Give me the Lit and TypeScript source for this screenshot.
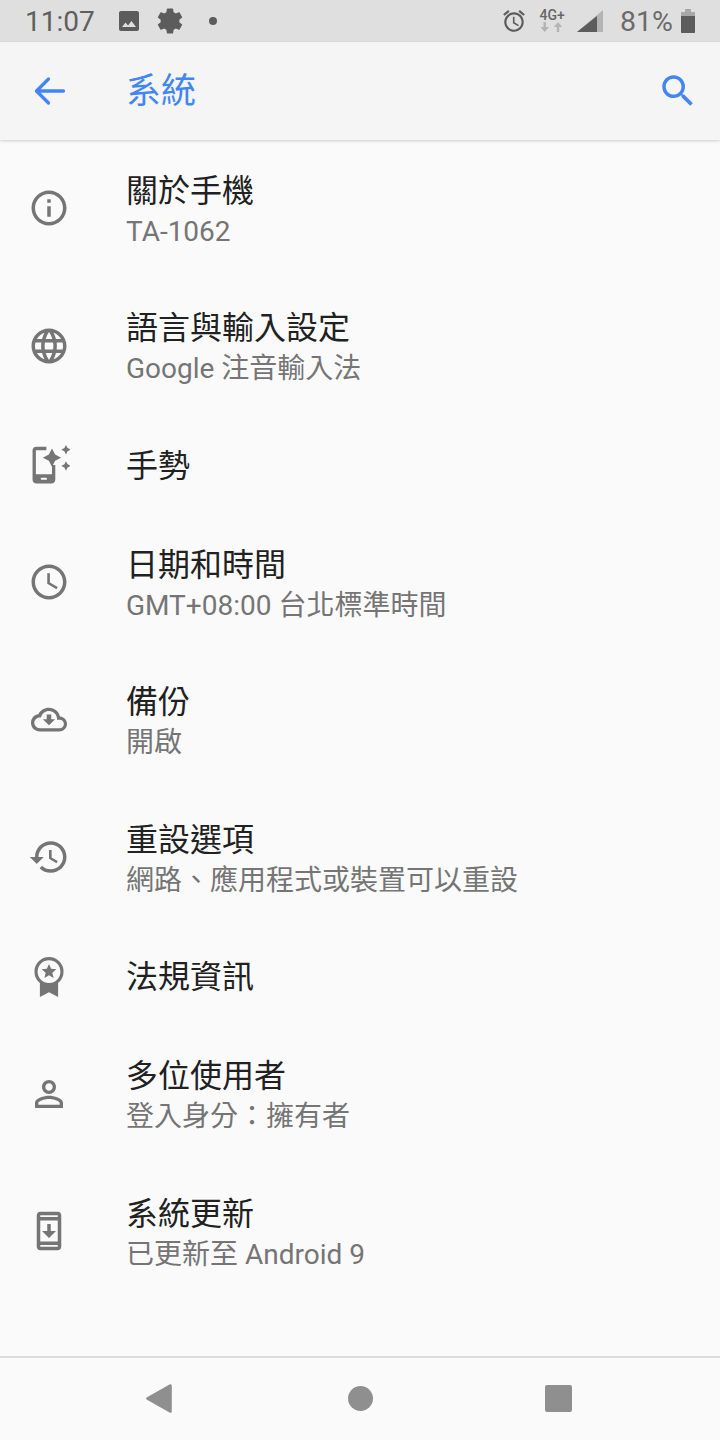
import { LitElement, html, css, svg } from 'lit';
import { customElement } from 'lit/decorators.js';

const BLUE = '#4285f4';

// Settings row icons, all on the 24 unit material grid
const ICONS = {
  info: svg`<path d="M11 7h2v2h-2zm0 4h2v6h-2zm1-9C6.48 2 2 6.48 2 12s4.48 10 10 10 10-4.48 10-10S17.52 2 12 2zm0 18c-4.41 0-8-3.59-8-8s3.59-8 8-8 8 3.59 8 8-3.59 8-8 8z"/>`,
  language: svg`<path d="M11.99 2C6.47 2 2 6.48 2 12s4.47 10 9.99 10C17.52 22 22 17.52 22 12S17.52 2 11.99 2zm6.93 6h-2.95c-.32-1.25-.78-2.45-1.38-3.56 1.84.63 3.37 1.91 4.33 3.56zM12 4.04c.83 1.2 1.48 2.53 1.91 3.96h-3.82c.43-1.43 1.08-2.76 1.91-3.96zM4.26 14C4.1 13.36 4 12.69 4 12s.1-1.36.26-2h3.38c-.08.66-.14 1.32-.14 2 0 .68.06 1.34.14 2H4.26zm.82 2h2.95c.32 1.25.78 2.45 1.38 3.56-1.84-.63-3.37-1.9-4.33-3.56zm2.95-8H5.08c.96-1.66 2.49-2.93 4.33-3.56C8.81 5.55 8.35 6.75 8.03 8zM12 19.96c-.83-1.2-1.48-2.53-1.91-3.96h3.82c-.43 1.43-1.08 2.76-1.91 3.96zM14.34 14H9.66c-.09-.66-.16-1.32-.16-2 0-.68.07-1.35.16-2h4.68c.09.65.16 1.32.16 2 0 .68-.07 1.34-.16 2zm.25 5.56c.6-1.11 1.06-2.31 1.38-3.56h2.95c-.96 1.65-2.49 2.93-4.33 3.56zM16.36 14c.08-.66.14-1.32.14-2 0-.68-.06-1.34-.14-2h3.38c.16.64.26 1.31.26 2s-.1 1.36-.26 2h-3.38z"/>`,
  gesture: svg`
    <path d="M10.5 2.2H4.6c-1.1 0-2 .9-2 2V21c0 1.2 1 2.2 2.2 2.2h8.6c1.2 0 2.2-1 2.2-2.2v-8.4h-1.9v5.2H4.5V4.1h6z"/>
    <rect x="7.4" y="19.8" width="3.4" height="1.2" rx=".3" fill="#fafafa"/>
    <path d="M13.7 3.200l1.800 3.400 3.400 1.800-3.400 1.800-1.800 3.400-1.800-3.400-3.400-1.800 3.400-1.800z"/>
    <path d="M21.7 1.100l.9 1.800 1.800.9-1.800.9-.9 1.800-.9-1.800-1.800-.9 1.800-.9z"/>
    <path d="M21.7 10.400l.9 1.800 1.800.9-1.800.9-.9 1.800-.9-1.800-1.800-.9 1.800-.9z"/>`,
  schedule: svg`<path d="M11.99 2C6.47 2 2 6.48 2 12s4.47 10 9.99 10C17.52 22 22 17.52 22 12S17.52 2 11.99 2zM12 20c-4.42 0-8-3.58-8-8s3.58-8 8-8 8 3.58 8 8-3.58 8-8 8z"/><path d="M12.5 7H11v6l5.25 3.15.75-1.23-4.5-2.67z"/>`,
  backup: svg`
    <path d="M12 5C9.3 5 7 6.5 5.9 8.7 3.3 9 1.7 11.2 1.7 13.6c0 2.8 2.3 5 5.1 5h11c2.4 0 4.5-1.9 4.5-4.3 0-2.3-1.8-4.2-4-4.3C17.700 7.200 15.100 5 12 5zm0 1.900c2.700 0 4.600 2.100 4.600 4.600v.4h1.500c1.400 0 2.400 1 2.400 2.400s-1.100 2.400-2.500 2.400H6.800c-1.800 0-3.200-1.400-3.200-3.100s1.400-3.100 3.200-3.100h.6C8 8.300 9.800 6.900 12 6.900z"/>
    <path d="M10.700 8.800h2.600v2.700h2.200L12 15l-3.500-3.500h2.200z"/>`,
  history: svg`<path d="M13 3c-4.970 0-9 4.030-9 9H1l3.890 3.890.07.14L9 12H6c0-3.870 3.130-7 7-7s7 3.130 7 7-3.130 7-7 7c-1.930 0-3.680-.79-4.940-2.060l-1.420 1.420C8.270 19.990 10.510 21 13 21c4.970 0 9-4.030 9-9s-4.030-9-9-9zm-1 5v5l4.280 2.540.72-1.210-3.500-2.080V8H12z"/>`,
  badge: svg`
    <path fill-rule="evenodd" d="M12 1.200a8.300 8.300 0 1 0 0 16.600 8.300 8.300 0 0 0 0-16.600zm0 1.800a6.500 6.500 0 1 1 0 13 6.500 6.500 0 0 1 0-13z"/>
    <path d="M12 5.100l1.200 2.800 3 .25-2.300 2 .7 3L12 11.600l-2.600 1.550.7-3-2.300-2 3-.25z"/>
    <path d="M6.800 15.700c1.400 1.100 3.200 1.800 5.200 1.800s3.800-.7 5.200-1.800V24L12 21.300 6.800 24z"/>`,
  person: svg`<path d="M12 5.900c1.160 0 2.100.94 2.100 2.100s-.94 2.100-2.100 2.100S9.900 9.160 9.900 8s.94-2.100 2.100-2.100m0 9c2.970 0 6.100 1.460 6.100 2.100v1.100H5.900V17c0-.64 3.130-2.100 6.100-2.100M12 4C9.790 4 8 5.790 8 8s1.790 4 4 4 4-1.790 4-4-1.790-4-4-4zm0 9c-2.670 0-8 1.340-8 4v3h16v-3c0-2.660-5.330-4-8-4z"/>`,
  update: svg`<path d="M17 1.010L7 1c-1.100 0-2 .9-2 2v18c0 1.100.9 2 2 2h10c1.100 0 2-.9 2-2V3c0-1.100-.9-1.990-2-1.990zM17 21H7v-1h10v1zm0-3H7V6h10v12zm0-14H7V3h10v1zM16 12h-3V8h-2v4H8l4 4 4-4z"/>`,
};

const ROWS = [
  { icon: ICONS.info, title: '關於手機', sub: 'TA-1062' },
  { icon: ICONS.language, title: '語言與輸入設定', sub: 'Google 注音輸入法' },
  { icon: ICONS.gesture, title: '手勢' },
  { icon: ICONS.schedule, title: '日期和時間', sub: 'GMT+08:00 台北標準時間' },
  { icon: ICONS.backup, title: '備份', sub: '開啟' },
  { icon: ICONS.history, title: '重設選項', sub: '網路、應用程式或裝置可以重設' },
  { icon: ICONS.badge, title: '法規資訊' },
  { icon: ICONS.person, title: '多位使用者', sub: '登入身分：擁有者' },
  { icon: ICONS.update, title: '系統更新', sub: '已更新至 Android 9' },
];

@customElement('app-root')
export class AppRoot extends LitElement {
  static styles = css`
    :host {
      display: flex;
      flex-direction: column;
      width: 720px;
      height: 1440px;
      overflow: hidden;
      background: #fafafa;
      font-family: Roboto, 'Noto Sans CJK TC', sans-serif;
    }
    .status {
      height: 42px;
      flex-shrink: 0;
      display: flex;
      align-items: center;
      background: #dfdfdf;
      color: #5f5f5f;
      padding: 0 25px;
    }
    .status svg {
      display: block;
      fill: #5c5c5c;
      flex-shrink: 0;
    }
    .time {
      font-size: 28px;
      line-height: 42px;
      padding-top: 2px;
      width: 92px;
    }
    .note-gear {
      margin-left: 14px;
    }
    .note-dot {
      width: 8px;
      height: 8px;
      border-radius: 50%;
      background: #5c5c5c;
      margin-left: 24px;
    }
    .spacer {
      flex: 1;
    }
    .net {
      width: 26px;
      margin-left: 12px;
      display: flex;
      flex-direction: column;
      align-items: center;
    }
    .net-label {
      font-size: 14px;
      line-height: 12px;
      font-weight: 500;
      color: #666;
    }
    .signal {
      margin-left: 12px;
    }
    .batt-text {
      font-size: 28.5px;
      line-height: 42px;
      padding-top: 2px;
      color: #6b6b6b;
      margin-left: 17px;
    }
    .battery {
      margin-left: 8px;
    }
    .toolbar {
      height: 97.5px;
      flex-shrink: 0;
      display: flex;
      align-items: center;
      background: #f5f5f5;
      box-shadow: 0 1px 3px rgba(0, 0, 0, 0.18);
      position: relative;
      z-index: 1;
      padding: 0 21px 0 29px;
    }
    .toolbar svg {
      display: block;
      flex-shrink: 0;
    }
    .toolbar h1 {
      flex: 1;
      margin: 0 0 0 55px;
      font-size: 35px;
      line-height: 42px;
      padding-top: 2px;
      font-weight: 400;
      color: #4285f4;
    }
    .list {
      flex: 1;
    }
    .row {
      display: flex;
      align-items: center;
      height: 99px;
      padding: 0 28px;
    }
    .row.two {
      height: 137.5px;
    }
    .row svg {
      display: block;
      width: 42px;
      height: 42px;
      fill: #757575;
      flex-shrink: 0;
    }
    .text {
      margin-left: 56px;
      padding-top: 3px;
      min-width: 0;
    }
    .row.two .text {
      padding-top: 5px;
    }
    .title {
      font-size: 32px;
      line-height: 42px;
      color: #212121;
    }
    .sub {
      font-size: 28px;
      line-height: 40px;
      color: #757575;
      white-space: nowrap;
    }
    .nav {
      height: 84px;
      box-sizing: border-box;
      flex-shrink: 0;
      border-top: 2px solid #dcdcdc;
      display: flex;
      align-items: center;
      padding: 0 0 2px 146px;
    }
    .nav svg {
      display: block;
      fill: #8f8f8f;
      flex-shrink: 0;
    }
    .nav .home {
      margin-left: 176px;
    }
    .nav .recents {
      margin-left: 172px;
    }
  `;

  render() {
    return html`
      <div class="status">
        <span class="time">11:07</span>
        <svg width="24" height="24" viewBox="0 0 24 24">
          <path d="M22 20V4c0-1.100-.9-2-2-2H4c-1.100 0-2 .9-2 2v16c0 1.100.9 2 2 2h16c1.100 0 2-.9 2-2zM8.500 13.500l2.500 3 3.500-4.500 4.500 6H5l3.500-4.500z"/>
        </svg>
        <svg class="note-gear" width="30" height="30" viewBox="0 0 24 24">
          <path d="M19.430 12.980c.04-.32.07-.64.07-.98s-.03-.66-.07-.98l2.110-1.650c.19-.15.24-.42.12-.64l-2-3.460c-.12-.22-.39-.3-.61-.22l-2.490 1c-.52-.4-1.080-.73-1.690-.98l-.38-2.650C14.460 2.180 14.250 2 14 2h-4c-.25 0-.46.18-.49.42l-.38 2.650c-.61.25-1.170.59-1.690.98l-2.490-1c-.23-.09-.49 0-.61.22l-2 3.460c-.13.22-.07.49.12.64l2.110 1.650c-.04.32-.07.65-.07.98s.03.66.07.98l-2.110 1.650c-.19.15-.24.42-.12.64l2 3.460c.12.22.39.3.61.22l2.490-1c.52.4 1.080.73 1.690.98l.38 2.650c.03.24.24.42.49.42h4c.25 0 .46-.18.49-.42l.38-2.650c.61-.25 1.170-.59 1.690-.98l2.490 1c.23.09.49 0 .61-.22l2-3.460c.12-.22.07-.49-.12-.64l-2.110-1.650z"/>
        </svg>
        <span class="note-dot"></span>
        <span class="spacer"></span>
        <svg width="26" height="26" viewBox="0 0 24 24">
          <path d="M22 5.720l-4.600-3.860-1.290 1.530 4.600 3.860L22 5.720zM7.880 3.390L6.600 1.860 2 5.710l1.290 1.530 4.590-3.850zM12.500 8H11v6l4.750 2.850.75-1.230-4-2.370V8zM12 4c-4.970 0-9 4.030-9 9s4.030 9 9 9 9-4.030 9-9-4.030-9-9-9zm0 16c-3.870 0-7-3.130-7-7s3.130-7 7-7 7 3.130 7 7-3.130 7-7 7z"/>
        </svg>
        <div class="net">
          <span class="net-label">4G+</span>
          <svg width="24" height="12" viewBox="0 0 24 12" style="fill:#b4b4b4">
            <path d="M3.500 1h2.400v5h3L4.700 11 .5 6h3zM18 1l4.200 5h-3v5h-2.400V6h-3z"/>
          </svg>
        </div>
        <svg class="signal" width="26" height="24" viewBox="0 0 26 24">
          <path d="M26 1v22H0z" fill="#b4b4b4"/>
          <path d="M20 7v16H0z"/>
        </svg>
        <span class="batt-text">81%</span>
        <svg class="battery" width="14" height="24" viewBox="0 0 14 24">
          <path d="M4 0h6v3H4z" fill="#a8a8a8"/>
          <path d="M1 3h12c.6 0 1 .4 1 1v4H0V4c0-.6.4-1 1-1z" fill="#a8a8a8"/>
          <path d="M0 7h14v16c0 .6-.4 1-1 1H1c-.6 0-1-.4-1-1z"/>
        </svg>
      </div>
      <div class="toolbar">
        <svg width="42" height="42" viewBox="0 0 42 42" fill="none" stroke=${BLUE} stroke-width="3.300" stroke-linecap="round" stroke-linejoin="round">
          <path d="M34.500 21H8M19.500 9L7.500 21l12 12"/>
        </svg>
        <h1>系統</h1>
        <svg width="42" height="42" viewBox="0 0 24 24" fill=${BLUE}>
          <path d="M15.500 14h-.79l-.28-.27C15.410 12.590 16 11.110 16 9.500 16 5.910 13.090 3 9.500 3S3 5.910 3 9.500 5.910 16 9.500 16c1.610 0 3.090-.59 4.230-1.570l.27.28v.79l5 4.990L20.490 19l-4.990-5zm-6 0C7.010 14 5 11.990 5 9.500S7.010 5 9.500 5 14 7.010 14 9.500 11.990 14 9.500 14z"/>
        </svg>
      </div>
      <div class="list">
        ${ROWS.map(
          (r) => html`
            <div class="row ${r.sub ? 'two' : ''}">
              <svg viewBox="0 0 24 24">${r.icon}</svg>
              <div class="text">
                <div class="title">${r.title}</div>
                ${r.sub ? html`<div class="sub">${r.sub}</div>` : ''}
              </div>
            </div>
          `
        )}
      </div>
      <div class="nav">
        <svg width="26" height="29" viewBox="0 0 26 29">
          <path d="M23.500.4c1.200-.6 2.300 0 2.300 1.300v25.600c0 1.300-1.100 1.900-2.300 1.300L1 15.800c-1.200-.6-1.200-2 0-2.600z"/>
        </svg>
        <svg class="home" width="25" height="25" viewBox="0 0 25 25"><circle cx="12.500" cy="12.500" r="12.500"/></svg>
        <svg class="recents" width="27" height="27" viewBox="0 0 27 27"><rect width="27" height="27" rx="2"/></svg>
      </div>
    `;
  }
}
